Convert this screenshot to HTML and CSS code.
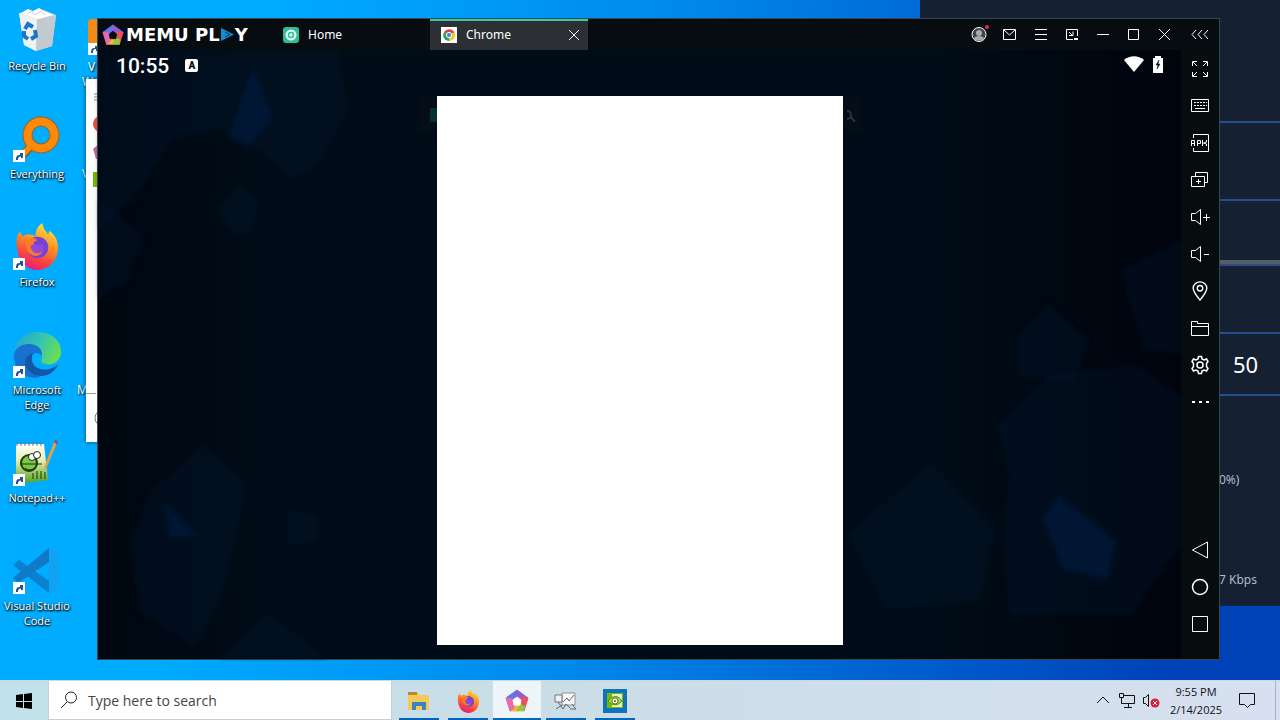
FILE: index.html
```html
<!DOCTYPE html>
<html lang="en">
<head>
<meta charset="utf-8">
<title>Desktop</title>
<link rel="stylesheet" href="styles.css">
</head>
<body>
<svg class="defs" aria-hidden="true">
  <defs>
    <linearGradient id="fx" x1="0.7" y1="0" x2="0.3" y2="1"><stop offset="0" stop-color="#ffe33e"/><stop offset=".4" stop-color="#ff9322"/><stop offset=".75" stop-color="#fb3f42"/><stop offset="1" stop-color="#e4178a"/></linearGradient>
    <linearGradient id="edgeTop" x1="0" y1="0.3" x2="1" y2="0.6"><stop offset="0" stop-color="#27a9c9"/><stop offset=".5" stop-color="#33c3b4"/><stop offset="1" stop-color="#6be04d"/></linearGradient>
    <linearGradient id="grass" x1="0" y1="0" x2="0" y2="1"><stop offset="0" stop-color="#fff"/><stop offset=".4" stop-color="#e8f0b0"/><stop offset="1" stop-color="#4f9f1c"/></linearGradient>
    <symbol id="shortcut" viewBox="0 0 12 12"><path d="M0 0h12v12H0z" fill="#fff"/><path d="M3 10c0-4 1-5 4-5V3h3v5H8V6.500C5.500 6.500 5 8 5 10z" fill="#24528c"/></symbol>
    <symbol id="firefox" viewBox="0 0 48 48">
      <path d="M4 24C3 17 4 12 7 9l3 5c2-2 5-3 8-2 2 0 4 1 5 2 0-6 2-11 7-14 1 7 4 8 6 12l1-4c6 4 9 10 9 17 0 13-9 23-21 23S5 38 4 24z" fill="url(#fx)"/>
      <circle cx="25" cy="25" r="11" fill="#7542d6"/>
      <path d="M14 18c4-4 9-3 11 0-4 0-5 3-3 5 3 2 7 3 7-1 5 8-4 15-11 10-5-3-5-10-4-14z" fill="#ff7a25"/>
      <path d="M18 23c3-2 6-1 9 0 2 0 3-1 2-3 5 5 1 11-4 11-4 0-7-4-7-8z" fill="#9346d8"/>
    </symbol>
    <symbol id="memu" viewBox="0 0 24 24">
      <g stroke-linejoin="round" stroke-width="1">
        <path d="M12 1 1 9l7 4 6-9z" fill="#5b79e8" stroke="#5b79e8"/>
        <path d="M12 1 23 9l-4 5-9-6z" fill="#8d5fd0" stroke="#8d5fd0"/>
        <path d="M23 9 19 22l-6-4 3-9z" fill="#ea5160" stroke="#ea5160"/>
        <path d="M19 22H5l2-8 9 2z" fill="#f6b73f" stroke="#f6b73f"/>
        <path d="M19 22h-8l4-7 5 2z" fill="#8fc93f"/>
        <path d="M5 22 1 9l7 1 1 9z" fill="#e56ab0" stroke="#e56ab0"/>
      </g>
      <path d="m12 8 4 3-1 5H9l-1-5z" fill="currentColor" stroke="currentColor" stroke-width="1" stroke-linejoin="round"/>
    </symbol>
  </defs>
</svg>

<main class="desktop">
  <nav class="shortcuts" aria-label="Desktop shortcuts">
    <a class="shortcut" href="#">
      <svg class="shortcut-icon" viewBox="0 0 48 48"><path d="M6 7 30 4l13 5-4 31-16 5-12-6z" fill="#dfe3e6"/><path d="M6 7l18 6-1 32-12-6z" fill="#f0f1f2"/><path d="M24 13 43 9l-4 31-16 5z" fill="#c3c9ce"/><path d="m8 7 7-4 5 2 6-3 5 3 9 4-15 4z" fill="#fff"/><path d="m14 8 5-3 3 4 6-4 4 4" fill="none" stroke="#c9ced2"/><g fill="none" stroke="#1976c8" stroke-width="4"><path d="m12 23 3-5 5 3"/><path d="m22 24 1 6-5 3"/><path d="m15 33-4-3v-5"/></g></svg>
      <span>Recycle Bin</span>
    </a>
    <a class="shortcut" href="#">
      <svg class="shortcut-icon" viewBox="0 0 48 48"><path d="m19 31-9 10" stroke="#8c5a20" stroke-width="8"/><circle cx="28" cy="21" r="13.500" fill="none" stroke="#9a6224" stroke-width="10"/><path d="m20 30-10 10" stroke="#ff8a0a" stroke-width="6"/><circle cx="28" cy="21" r="13.500" fill="none" stroke="#ff8a0a" stroke-width="8"/><use href="#shortcut" y="36" width="12" height="12"/></svg>
      <span>Everything</span>
    </a>
    <a class="shortcut" href="#">
      <svg class="shortcut-icon" viewBox="0 0 48 48"><use href="#firefox" y="1" width="47" height="47"/><use href="#shortcut" y="36" width="12" height="12"/></svg>
      <span>Firefox</span>
    </a>
    <a class="shortcut" href="#">
      <svg class="shortcut-icon" viewBox="0 0 48 48"><path d="M1 23C3 9 14 2 25 2c13 0 23 8 23 20 0 9-8 14-16 12-5-1-4-3-3-6 1-7-5-12-13-12S4 19 1 23z" fill="url(#edgeTop)"/><path d="M1 25c1-7 7-11 15-11 8 0 14 5 13 12-2-3-6-4-9-2-6 5-3 19 8 23C13 51 0 39 1 25z" fill="#1671cf"/><path d="M20 23c-4 9 2 19 17 16l8-4c-6 13-24 15-31 3-4-6-2-12 6-15z" fill="#1257a8"/><use href="#shortcut" y="36" width="12" height="12"/></svg>
      <span>Microsoft Edge</span>
    </a>
    <a class="shortcut" href="#">
      <svg class="shortcut-icon" viewBox="0 0 48 48"><path d="M3 6h28l4 36-32 4z" fill="url(#grass)"/><path d="M4 8V4m4 4V4m4 4V4m4 4V4m4 4V4m4 4V4m4 4V4" stroke="#6b7378"/><path d="M44 5 34 29l-3 4 1-6L41 4z" fill="#e7a13c"/><path d="m41 4 1-2 3 1-1 4z" fill="#6a5f7f"/><ellipse cx="16" cy="25" rx="8" ry="8" fill="#7bc943" stroke="#20380f" stroke-width="2"/><path d="M7 26h22M12 30c4 3 8 2 11-1M20 41v-6m4 6v-8m4 8v-8m4 8v-7" fill="none" stroke="#183410"/><circle cx="19" cy="19" r="3.500" fill="#fff" stroke="#222"/><circle cx="24" cy="17" r="3.500" fill="#fff" stroke="#222"/><use href="#shortcut" y="36" width="12" height="12"/></svg>
      <span>Notepad++</span>
    </a>
    <a class="shortcut" href="#">
      <svg class="shortcut-icon" viewBox="0 0 48 48"><path d="m36 2 10 5v36l-10 5z" fill="#12a2f3"/><path d="m1 18 5-4 30 21v12L1 20z" fill="#0a80cf"/><path d="M36 2 0 32l5 5 31-21z" fill="#1279c6"/><use href="#shortcut" y="36" width="12" height="12"/></svg>
      <span>Visual Studio Code</span>
    </a>
  </nav>

  <div class="covered covered-top"><svg class="cone" viewBox="0 0 14 36"><path d="M0 3q0-3 3-3h11v24H0z" fill="#f28a18"/><path d="M0 24h12v12H0z" fill="#fff"/><path d="M3 34c0-4 1-5 4-5v-2h3v5H8v-2c-3 0-3 2-3 4z" fill="#24528c"/></svg><span>V</span><span class="outdent">W</span></div>
  <div class="covered covered-mid">V</div>
  <div class="covered covered-low">M</div>

  <section class="menu-window" aria-label="Menu">
    <svg viewBox="0 0 12 363"><path d="M8 15h4m-4 3h4m-4 3h4" stroke="#888"/><circle cx="15" cy="45" r="8" fill="#f0503c"/><path d="m14 64-7 6 3 10h6z" fill="#c86a9c"/><path d="M7 93h5v15H7z" fill="#76b900"/><path d="M0 314.500h10" stroke="#999"/><circle cx="17" cy="339" r="8" fill="none" stroke="#777"/></svg>
  </section>

  <section class="stats-window" aria-label="Statistics">
    <div class="stat stat-head"></div>
    <div class="stat stat-row"></div>
    <div class="stat stat-split"></div>
    <div class="stat stat-gap"></div>
    <div class="stat stat-value">50</div>
    <div class="stat-notes"><p>0%)</p><p>7 Kbps</p></div>
  </section>

  <section class="emulator" aria-label="MEmu Play">
    <header class="titlebar">
      <div class="brand"><svg class="brand-mark"><use href="#memu"/></svg><span>MEMU PL</span><svg class="brand-play" viewBox="0 0 13 13"><path d="M0 0 13 6.500 0 13z" fill="#168bd2"/><path d="m4 4 5 2.500-5 2.500" fill="none" stroke="#07385c"/></svg><span>Y</span></div>
      <button class="tab"><svg viewBox="0 0 16 16"><rect width="16" height="16" rx="3" fill="#2fbd91"/><circle cx="8" cy="8" r="5.500" fill="#e8fff7"/><circle cx="8" cy="8" r="2.500" fill="none" stroke="#2fbd91" stroke-width="1.500"/></svg>Home</button>
      <div class="tab tab-active"><svg viewBox="0 0 16 16"><path d="M0 0h16v16H0z" fill="#fff"/><path d="M8 8 3 5a6 6 0 0 1 10.500.500z" fill="#e04436"/><path d="M8 8l5.500-3A6 6 0 0 1 8 14z" fill="#f7c934"/><path d="M8 8v6A6 6 0 0 1 3 5z" fill="#2fa253"/><circle cx="8" cy="8" r="2.600" fill="#4285f4" stroke="#fff"/></svg>Chrome<button class="tab-close" aria-label="Close tab"><svg viewBox="0 0 10 10"><path d="m0 0 10 10M10 0 0 10"/></svg></button></div>
      <div class="window-tools">
        <button aria-label="Account"><svg viewBox="0 0 20 20"><circle cx="10" cy="9.500" r="7" fill="#444" stroke="#fff"/><circle cx="10" cy="8" r="3" fill="#aaa" stroke="none"/><path d="M5 14c0-4 10-4 10 0-3 2-7 2-10 0z" fill="#aaa" stroke="none"/><circle cx="18" cy="2" r="2" fill="#e02c58" stroke="none"/></svg></button>
        <button aria-label="Messages"><svg viewBox="0 0 20 20"><path d="M3.500 4.500h12v10h-12zM4 5l5.500 5L15 5"/></svg></button>
        <button aria-label="Menu"><svg viewBox="0 0 20 20"><path d="M4 4.500h12M4 9.500h12M4 14.500h12"/></svg></button>
        <button aria-label="Compact view"><svg viewBox="0 0 20 20"><path d="M11 14.500H4.500v-10h11V11M7 7l3 3m1-3.500v4H7"/><path d="M12 14h4" stroke-width="2"/></svg></button>
        <button aria-label="Minimize"><svg viewBox="0 0 20 20"><path d="M4 9.500h12"/></svg></button>
        <button aria-label="Maximize"><svg viewBox="0 0 20 20"><path d="M4.500 4.500h10v10h-10z"/></svg></button>
        <button aria-label="Close"><svg viewBox="0 0 20 20"><path d="m4 4 11 11M15 4 4 15"/></svg></button>
      </div>
      <button class="collapse" aria-label="Collapse sidebar"><svg viewBox="0 0 20 20"><path d="m6 5-4 4.500L6 14M12 5l-4 4.500 4 4.500M18 5l-4 4.500 4 4.500"/></svg></button>
    </header>

    <div class="emulator-body">
      <div class="screen">
        <svg class="wallpaper" viewBox="0 0 1082 610" preserveAspectRatio="none" aria-hidden="true">
          <g fill="#02162f" fill-opacity=".35">
            <path d="M0 0h240l10 60-30 55-25 15-35-30-35-20-50 10-40 60-35 30z"/><path d="m140 135 20 15-4 30-18 7-20-25z"/>
            <path d="m105 395 44 38-12 60-15 60-25 45-55-35-10-70 20-50z"/><path d="m190 460 30 5v28l-30 2z"/>
            <path d="m832 413 65 65-15 75-95 7-38-75z"/><path d="m1038 316 44 30v150l-50 70-122 0-5-80 5-60-12-50 52-50z"/>
            <path d="m950 255 40 35-13 42-58-5v-40z"/><path d="m1022 220 60-30v115l-38-5z"/><path d="m170 565 60 45H120z"/><path d="m0 150 45 35-15 45-30 20z"/>
          </g>
          <g fill="#001a3b" fill-opacity=".75"><path d="m155 18 20 49-25 30-20-10z"/><path d="m65 452 35 35-28 2z"/><path d="m960 446 57 46-8 38-45-10-20-50z"/></g>
        </svg>
        <div class="home-search"><svg viewBox="0 0 12 14"><path d="M0 0h8v14H0z" fill="#06302e"/></svg><svg viewBox="0 0 12 14"><path d="M1 11a4 4 0 1 0 0-8M5 9l4 5" fill="none" stroke="#29343b" stroke-width="2"/></svg></div>
        <div class="status-bar">
          <time>10:55</time>
          <span class="input-badge">A</span>
          <svg class="wifi" viewBox="0 0 20 16"><path d="M0 4c6-5 14-5 20 0L10 16z" fill="#fff"/></svg>
          <svg class="battery" viewBox="0 0 10 17"><path d="M2 0h6v2h2v15H0V2h2z" fill="#fff"/><path d="M6 4 3 9h2l-1 4 3-5H5z" fill="#05101c" stroke="#05101c" stroke-width=".5"/></svg>
        </div>
        <div class="app-card"></div>
      </div>
      <aside class="toolbar">
        <button aria-label="Full screen"><svg viewBox="0 0 20 20"><path d="M7 2.500H2.500V7M3 3l4 4m6-4.500h4.500V7M17 3l-4 4M2.500 13v4.500H7M3 17l4-4m10.500 0v4.500H13m4-.5-4-4"/></svg></button>
        <button aria-label="Keyboard mapping"><svg viewBox="0 0 20 20"><path d="M1.500 3.500h17v12h-17zM5 12.500h10"/><path d="M4 6.500h13M4 9.500h13" stroke-dasharray="2 1"/></svg></button>
        <button aria-label="Install APK"><svg viewBox="0 0 20 20"><path d="M3.500 5V1.500h15v17h-15V15M1.500 13V7.500h3V13M1.500 10.500h3M7.500 13V7.500h3v3h-3M12.500 7v6m4-6v2l-3 1 3 1v2"/></svg></button>
        <button aria-label="New instance"><svg viewBox="0 0 20 20"><path d="M1.500 6.500h13v10h-13zM5.500 6V2.500h12v10H15M8.500 9v5M6 11.500h5"/></svg></button>
        <button aria-label="Volume up"><svg viewBox="0 0 20 20"><path d="M1.500 6.500h4l5-4v15l-5-4h-4zM13 10.500h7M16.500 7v7"/></svg></button>
        <button aria-label="Volume down"><svg viewBox="0 0 20 20"><path d="M1.500 6.500h4l5-4v15l-5-4h-4zM14 10.500h5"/></svg></button>
        <button aria-label="Location"><svg viewBox="0 0 20 22"><path d="M10 21C6 16 2.500 12 2.500 8a7.500 7 0 0 1 15 0c0 4-3.500 8-7.500 13z" stroke-width="1.500"/><circle cx="10" cy="8" r="3" stroke-width="1.500"/></svg></button>
        <button aria-label="Shared folder"><svg viewBox="0 0 20 20"><path d="M1.500 3.500h6v2h11v12h-17zM2 8.500h17"/></svg></button>
        <button aria-label="Settings"><svg viewBox="0 0 20 20"><path d="m8 4 .500-2.500h3L12 4l2 1 2.500-1L18 6.500 16.500 8.500v3l1.500 2-1.500 2.500L14 15l-2 1-.500 2.500h-3L8 16l-2-1-2.500 1L2 13.500l1.500-2v-3L2 6.500 3.500 4 6 5z" stroke-width="1.500"/><circle cx="10" cy="10" r="3" stroke-width="1.500"/></svg></button>
        <button aria-label="More"><svg viewBox="0 0 20 20"><path d="M2 10h3m4 0h3m4 0h3" stroke-width="2"/></svg></button>
        <button class="push-down" aria-label="Back"><svg viewBox="0 0 20 20"><path d="M2.500 10 17.500 2v16z"/></svg></button>
        <button aria-label="Home"><svg viewBox="0 0 20 20"><circle cx="10" cy="10" r="7.500" stroke-width="1.500"/></svg></button>
        <button aria-label="Recent apps"><svg viewBox="0 0 20 20"><path d="M2.500 2.500h15v15h-15z"/></svg></button>
      </aside>
    </div>
  </section>
</main>

<footer class="taskbar">
  <button class="start" aria-label="Start"><svg viewBox="0 0 16 16"><path d="m0 2 7-1v7H0zM8 1l8-1v8H8zM0 9h7v6l-7-1zM8 9h8v7l-8-1z"/></svg></button>
  <label class="search"><svg viewBox="0 0 18 18"><circle cx="11" cy="6.500" r="5.500"/><path d="m7 11-6 6"/></svg><input type="text" placeholder="Type here to search" aria-label="Search"></label>
  <div class="tasks">
    <button aria-label="File Explorer"><svg viewBox="0 0 24 24"><path d="M1 3h9l2 3h10v15H1z" fill="#f5ca57"/><path d="M1 3h9v3H1z" fill="#b88635"/><path d="M5 21v-8h14v8h-4v-4H9v4z" fill="#3c83c5"/></svg></button>
    <button aria-label="Firefox"><svg><use href="#firefox"/></svg></button>
    <button class="current" aria-label="MEmu"><svg><use href="#memu"/></svg></button>
    <button aria-label="Performance tool"><svg viewBox="0 0 24 24"><path d="M8 4h13v12H8z" fill="#f7f8fa" stroke="#8c9298"/><path d="M1 6h7v7H1z" fill="#eef0f2" stroke="#777"/><path d="m9 13 4-4 2 3 5-6M4 13l5 7 3-5 4 4M2 20l6-4m8 4h6l-4-5" fill="none" stroke="#60676e"/></svg></button>
    <button aria-label="NVIDIA"><svg viewBox="0 0 24 24"><path d="M0 0h24v24H0z" fill="#0f72bd"/><path d="M4 4h16v15H4z" fill="#76b900"/><path d="M9 5h10v13H9z" fill="#e8f1cf"/><path d="M5 12c5-6 10-6 14 0-4 5-10 5-14 0z" fill="#a6d04e" stroke="#598c00"/><circle cx="12" cy="12" r="3" fill="#fff" stroke="#598c00"/><circle cx="12" cy="12" r="1" fill="#436b05"/></svg></button>
  </div>
  <div class="tray">
    <button aria-label="Show hidden icons"><svg viewBox="0 0 20 20"><path d="m4 12 6-6 6 6"/></svg></button>
    <button aria-label="Network"><svg viewBox="0 0 20 20"><path d="M7 4.500h10.500v8H4.500V8M2.500 2.500h4v4h-4zM4.500 6v6M11.500 13v3M7 16.500h8"/></svg></button>
    <button aria-label="Volume muted"><svg viewBox="0 0 20 20"><path d="M2.500 6.500h2l3-3v12l-3-3h-2z"/><circle cx="14" cy="12" r="4.500" fill="#d81e3c" stroke="none"/><path d="m12 10 4 4m0-4-4 4" stroke="#fff"/></svg></button>
    <div class="clock"><time>9:55 PM</time><time>2/14/2025</time></div>
    <button class="notify" aria-label="Notifications"><svg viewBox="0 0 20 20"><path d="M2.500 2.500h15v11h-4l-3 3-3-3h-5z"/></svg></button>
    <button class="peek" aria-label="Show desktop"></button>
  </div>
</footer>
</body>
</html>
```
FILE: styles.css
```css
* { box-sizing: border-box; }
body {
  margin: 0;
  height: 100vh;
  display: flex;
  flex-direction: column;
  overflow: hidden;
  font-family: "Noto Sans", "Open Sans", sans-serif;
  font-size: 12px;
}
button { padding: 0; border: 0; background: none; color: inherit; font: inherit; }
svg { display: block; flex: none; }
p { margin: 0; }
.defs { position: absolute; width: 0; height: 0; }

.desktop {
  position: relative;
  flex: 1;
  min-height: 0;
  overflow: hidden;
  background: linear-gradient(100deg, #00aeff 0%, #00aaff 20%, #008aec 48%, #0060d0 72%, #0042b8 92%);
}
.shortcuts {
  width: 74px;
  padding-top: 6px;
  display: grid;
  grid-auto-rows: 108px;
}
.shortcut {
  display: flex;
  flex-direction: column;
  align-items: center;
  gap: 4px;
  color: #fff;
  font-family: "Open Sans", sans-serif;
  font-size: 11px;
  font-weight: 500;
  line-height: 15px;
  text-align: center;
  text-decoration: none;
  text-shadow: 1px 1px 2px #000, 0 1px 2px #000;
}
.shortcut-icon { width: 48px; height: 48px; overflow: visible; }

.covered {
  position: absolute;
  color: #fff;
  line-height: 15px;
  text-shadow: 1px 1px 2px #000;
}
.covered-top { left: 88px; top: 19px; display: flex; flex-direction: column; }
.covered-mid { left: 82px; top: 166px; }
.covered-low { left: 77px; top: 382px; }
.cone { width: 14px; height: 36px; margin-bottom: 4px; }
.outdent { margin-left: -6px; }

.menu-window {
  position: absolute;
  left: 86px;
  top: 79px;
  width: 200px;
  background: #fff;
  box-shadow: 0 0 5px #004a78;
}
.menu-window svg { width: 12px; height: 363px; }

.stats-window {
  position: absolute;
  left: 920px;
  right: 0;
  top: 0;
  padding-left: 299px;
  background: #152033;
  color: #b4bac4;
  border-bottom: 2px solid #12223c;
}
.stat { border-bottom: 2px solid #234f91; }
.stat-head { height: 123px; }
.stat-row { height: 78px; }
.stat-split { height: 65px; border-bottom: 2px solid #2d4a87; box-shadow: inset 0 -4px #555d66; }
.stat-gap { height: 68px; }
.stat-value {
  height: 62px;
  padding-left: 14px;
  color: #fff;
  font-size: 22px;
  line-height: 60px;
}
.stat-notes { padding: 74px 0 14px; display: grid; gap: 80px; line-height: 20px; }

.emulator {
  position: absolute;
  inset: 18px 60px 20px 97px;
  display: flex;
  flex-direction: column;
  border: 1px solid #35484d;
  background: #050b0f;
  color: #fff;
}
.titlebar { height: 31px; flex: none; display: flex; align-items: center; background: #060c10; }
.brand {
  width: 174px;
  padding-left: 4px;
  display: flex;
  align-items: center;
  font-family: "DejaVu Sans", sans-serif;
  font-weight: bold;
  font-size: 18px;
  line-height: 31px;
  white-space: nowrap;
}
.brand-mark { width: 22px; height: 22px; margin-right: 2px; color: #060c10; }
.brand-play { width: 13px; height: 13px; margin: 0 1px; }
.tab {
  width: 158px;
  height: 31px;
  padding: 0 9px 0 11px;
  display: flex;
  align-items: center;
  gap: 9px;
}
.tab > svg { width: 16px; height: 16px; }
.tab-active { background: #2c3035; box-shadow: inset 0 2px #35c9b0; }
.tab-close { margin-left: auto; }
.tab-close svg { width: 10px; height: 10px; }
.titlebar button svg, .toolbar svg { stroke: #fff; fill: none; }
.titlebar .tab > svg { stroke: none; }
.window-tools { margin-left: auto; display: flex; gap: 11px; }
.window-tools svg, .collapse svg { width: 20px; height: 20px; overflow: visible; }
.collapse { width: 38px; margin-left: 6px; display: flex; justify-content: center; }

.emulator-body { flex: 1; min-height: 0; display: flex; }
.screen {
  position: relative;
  flex: 1;
  display: flex;
  flex-direction: column;
  align-items: center;
  padding-bottom: 14px;
  background: linear-gradient(90deg, #000711, #000c17 15%, #000c17 78%, #00040d);
}
.wallpaper { position: absolute; inset: 0; width: 100%; height: 100%; filter: blur(2px); }
.home-search {
  position: absolute;
  top: 47px;
  left: 50%;
  width: 444px;
  height: 36px;
  margin-left: -222px;
  padding: 0 4px 0 12px;
  display: flex;
  align-items: center;
  justify-content: space-between;
  background: #050e17;
}
.home-search svg { width: 12px; height: 14px; }
.status-bar {
  position: relative;
  width: 100%;
  height: 46px;
  padding: 6px 18px 0;
  display: flex;
  align-items: flex-start;
  font-family: Roboto, sans-serif;
  font-size: 21px;
  font-weight: 500;
  line-height: 20px;
}
.input-badge {
  width: 13px;
  height: 13px;
  margin: 3px auto 0 16px;
  border-radius: 2px;
  background: #fff;
  color: #06101a;
  font-size: 10px;
  font-weight: 900;
  line-height: 13px;
  text-align: center;
}
.wifi { width: 20px; height: 16px; margin-right: 9px; }
.battery { width: 10px; height: 17px; }
.app-card { position: relative; flex: 1; min-height: 0; aspect-ratio: 406 / 549; background: #fff; }
.toolbar {
  width: 38px;
  display: flex;
  flex-direction: column;
  padding-bottom: 17px;
  background: #050d0f;
}
.toolbar button { height: 37px; display: flex; align-items: center; justify-content: center; }
.toolbar svg { width: 20px; height: 20px; overflow: visible; }
.toolbar .push-down { margin-top: auto; }

.taskbar {
  height: 40px;
  flex: none;
  display: flex;
  background: linear-gradient(90deg, #c1e2ea, #cbdde7 45%, #d7e0f0);
  border-top: 1px solid #bddde8;
}
.start { width: 48px; display: flex; align-items: center; justify-content: center; }
.start svg { width: 16px; height: 16px; }
.search {
  width: 344px;
  padding: 0 11px;
  display: flex;
  align-items: center;
  gap: 10px;
  background: #fff;
  border: 1px solid #c8d0d2;
  border-top: 0;
}
.search svg { width: 18px; height: 18px; fill: none; stroke: #222; }
.search input {
  width: 100%;
  min-width: 0;
  padding: 0;
  border: 0;
  outline: 0;
  background: none;
  font: 14px "Open Sans", sans-serif;
}
.search input::placeholder { color: #444; opacity: 1; }
.tasks { display: flex; padding-left: 3px; gap: 1px; }
.tasks button {
  width: 48px;
  display: grid;
  place-items: center;
  background: linear-gradient(#0067bd, #0067bd) bottom / 40px 2px no-repeat;
}
.tasks .current { color: #fff; background-color: #eef5f8; background-size: 48px 2px; }
.tasks svg { width: 24px; height: 24px; }
.tray { margin-left: auto; display: flex; align-items: center; color: #111; }
.tray svg { width: 20px; height: 20px; margin: 0 2px; fill: none; stroke: #111; }
.clock {
  width: 66px;
  display: grid;
  font-family: "Open Sans", sans-serif;
  font-size: 11px;
  line-height: 18px;
  text-align: center;
}
.notify { margin-left: 6px; }
.peek { width: 5px; height: 40px; margin-left: 16px; border-left: 1px solid #a9b2bf; }
```
